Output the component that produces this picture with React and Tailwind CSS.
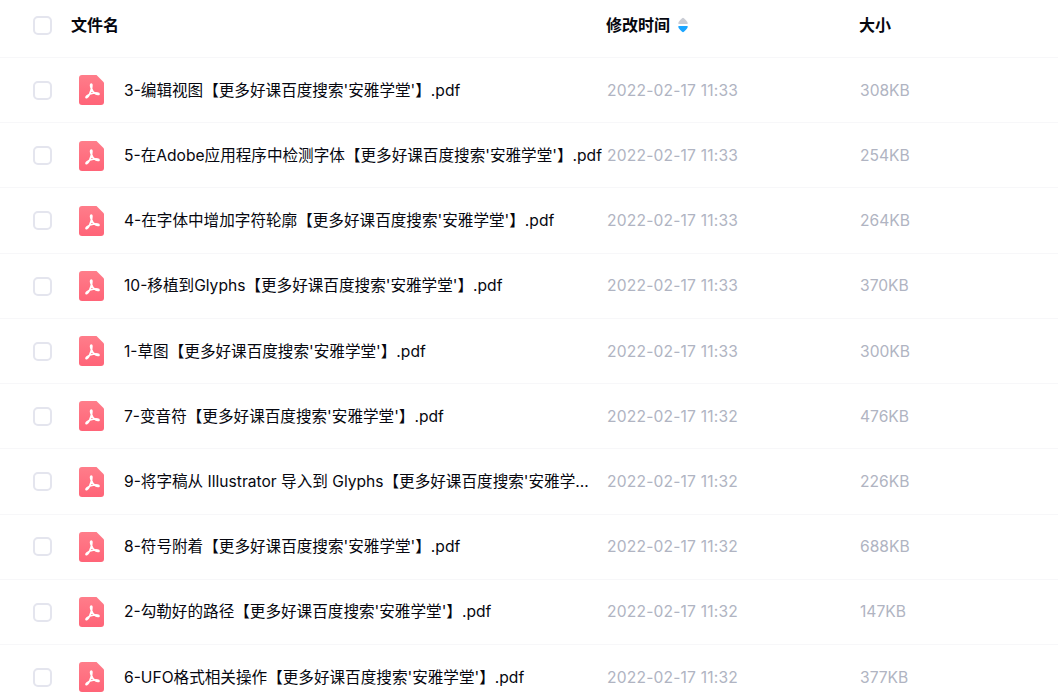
const rows = [
  ["3-编辑视图【更多好课百度搜索'安雅学堂'】.pdf", "2022-02-17 11:33", "308KB"],
  ["5-在Adobe应用程序中检测字体【更多好课百度搜索'安雅学堂'】.pdf", "2022-02-17 11:33", "254KB"],
  ["4-在字体中增加字符轮廓【更多好课百度搜索'安雅学堂'】.pdf", "2022-02-17 11:33", "264KB"],
  ["10-移植到Glyphs【更多好课百度搜索'安雅学堂'】.pdf", "2022-02-17 11:33", "370KB"],
  ["1-草图【更多好课百度搜索'安雅学堂'】.pdf", "2022-02-17 11:33", "300KB"],
  ["7-变音符【更多好课百度搜索'安雅学堂'】.pdf", "2022-02-17 11:32", "476KB"],
  ["9-将字稿从 Illustrator 导入到 Glyphs【更多好课百度搜索'安雅学堂'】.pdf", "2022-02-17 11:32", "226KB"],
  ["8-符号附着【更多好课百度搜索'安雅学堂'】.pdf", "2022-02-17 11:32", "688KB"],
  ["2-勾勒好的路径【更多好课百度搜索'安雅学堂'】.pdf", "2022-02-17 11:32", "147KB"],
  ["6-UFO格式相关操作【更多好课百度搜索'安雅学堂'】.pdf", "2022-02-17 11:32", "377KB"],
];

function PdfIcon() {
  return (
    <svg width="25" height="30" viewBox="0 0 25 30" className="block">
      <defs>
        <linearGradient id="pdfg" x1="0" y1="0" x2="0" y2="1">
          <stop offset="0" stopColor="#ff7d8a" />
          <stop offset="1" stopColor="#ff6478" />
        </linearGradient>
      </defs>
      <path d="M3 0H17.500L25 7.500V27a3 3 0 0 1-3 3H3a3 3 0 0 1-3-3V3a3 3 0 0 1 3-3Z" fill="url(#pdfg)" />
      <path
        d="M12.300 9c-.9 0-.9 1.200-.2 3.700.7 2.600 2.500 4.800 4.500 6 1.500.9 3.400 1.100 3.400.2 0-.9-2.400-1.200-4.800-.9-3 .3-5.700 1.300-7.500 3-1.200 1.200-.7 2 .2 1.500 1.700-1 4.200-5.600 4.800-10.100.2-2 .4-3.400-.4-3.400Z"
        fill="none"
        stroke="#fff"
        strokeWidth="1.700"
        strokeLinejoin="round"
      />
    </svg>
  );
}

function Check() {
  return <div className="h-[19px] w-[19px] rounded-[5px] border-2 border-[#e4e5ee] bg-white shrink-0" />;
}

export default function App() {
  return (
    <div
      className="h-[699px] overflow-hidden bg-white"
      style={{ fontFamily: "Inter, 'Noto Sans CJK SC', sans-serif" }}
    >
      <div className="flex h-[58px] items-center border-b border-[#f7f7f9] pb-[7px]">
        <div className="w-[71px] pl-[33px] shrink-0"><Check /></div>
        <div className="w-[535px] shrink-0 text-[16px] font-bold text-[#06070f]">文件名</div>
        <div className="flex w-[253px] shrink-0 items-center text-[16px] font-bold text-[#06070f]">
          修改时间
          <svg width="12" height="16" viewBox="0 0 12 16" className="ml-[7px]">
            <path d="M6 0.800C7 0.800 10.800 5 10.800 6.300 10.800 6.800 10.400 7 10 7H2C1.600 7 1.200 6.800 1.200 6.300 1.200 5 5 0.800 6 0.800Z" fill="#c9ccd4" />
            <path d="M2 9H10C10.400 9 10.800 9.200 10.800 9.700 10.800 11 7 15.200 6 15.200 5 15.200 1.200 11 1.200 9.700 1.200 9.200 1.600 9 2 9Z" fill="#1ba5ff" />
          </svg>
        </div>
        <div className="text-[16px] font-bold text-[#06070f]">大小</div>
      </div>
      {rows.map(([name, time, size]) => (
        <div key={name} className="flex h-[65.22px] items-center border-b border-[#f7f7f9] pt-[0.5px]">
          <div className="w-[71px] pl-[33px] shrink-0"><Check /></div>
          <div className="w-[53px] shrink-0 pl-[8px]"><PdfIcon /></div>
          <div className="w-[478px] shrink-0 truncate text-[15.6px] text-[#06070f]">{name}</div>
          <div className="ml-[5px] w-[253px] shrink-0 text-[15.6px] tracking-[0.19px] text-[#b0b4c2]">{time}</div>
          <div className="text-[15.6px] text-[#b0b4c2]">{size}</div>
        </div>
      ))}
    </div>
  );
}
